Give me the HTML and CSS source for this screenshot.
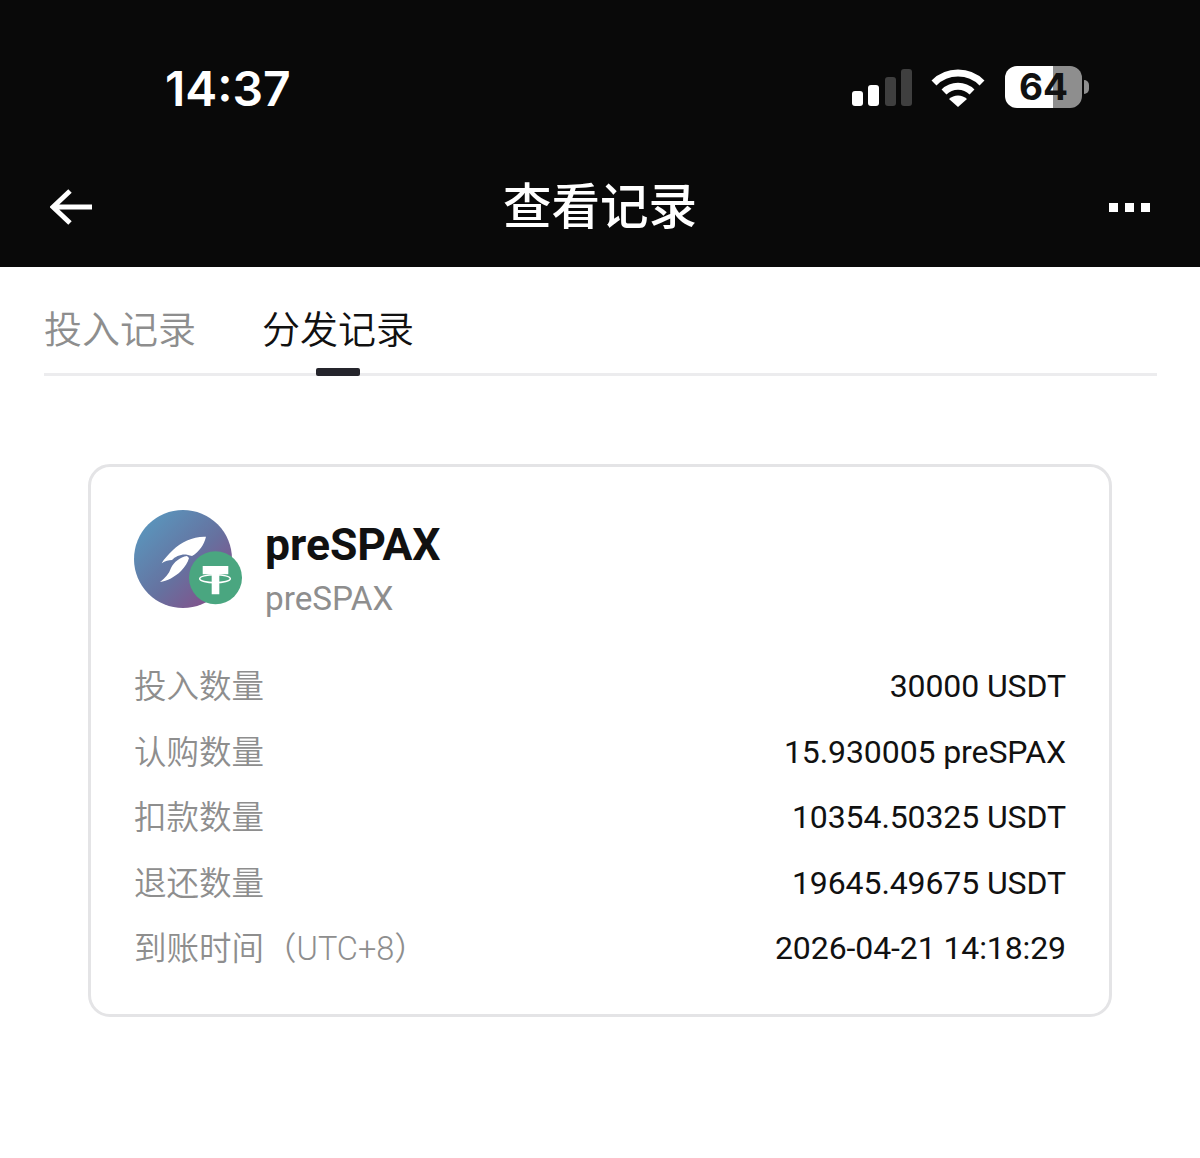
FILE: index.html
```html
<!DOCTYPE html>
<html lang="zh-Hans">
<head>
    <meta charset="UTF-8">
    <meta name="viewport" content="width=device-width, initial-scale=1.0">
    <title>查看记录</title>
    <link rel="stylesheet" href="styles.css">
</head>
<body>
    <header class="top">
        <div class="status">
            <span class="clock">14:37</span>
            <div class="status-icons">
                <svg class="signal" width="60" height="38" viewBox="0 0 60 38">
                    <rect x="0" y="22" width="11" height="15" rx="3" fill="#fff"/>
                    <rect x="16" y="16" width="11" height="21" rx="3" fill="#fff"/>
                    <rect x="33" y="8" width="11" height="29" rx="3" fill="#3f3f3f"/>
                    <rect x="49" y="0" width="11" height="37" rx="3" fill="#3f3f3f"/>
                </svg>
                <svg class="wifi" width="54" height="38" viewBox="0 0 54 38">
                    <path d="M3 14 A34 34 0 0 1 51 14" fill="none" stroke="#fff" stroke-width="7"/>
                    <path d="M13 23 A20 20 0 0 1 41 23" fill="none" stroke="#fff" stroke-width="7"/>
                    <path d="M18 30 A13 13 0 0 1 36 30 L27 38 Z" fill="#fff"/>
                </svg>
                <div class="battery">
                    <div class="battery-body"><span class="battery-num">64</span></div>
                    <div class="battery-cap"></div>
                </div>
            </div>
        </div>
        <div class="nav">
            <svg class="back" width="44" height="36" viewBox="0 0 44 36">
                <path d="M20 2 L3 18 L20 34 M3 18 H42" fill="none" stroke="#fff" stroke-width="5"/>
            </svg>
            <h1>查看记录</h1>
            <div class="more"><i></i><i></i><i></i></div>
        </div>
    </header>

    <div class="tabs">
        <span class="tab">投入记录</span>
        <span class="tab active">分发记录</span>
    </div>

    <section class="card">
        <div class="coin">
            <div class="logo">
                <svg width="110" height="100" viewBox="0 0 110 100">
                    <defs>
                        <linearGradient id="coinbg" x1="0" y1="0" x2="1" y2="1">
                            <stop offset="0.1" stop-color="#5a96bd"/>
                            <stop offset="0.55" stop-color="#66719f"/>
                            <stop offset="0.95" stop-color="#8a4a86"/>
                        </linearGradient>
                    </defs>
                    <circle cx="49" cy="49" r="49" fill="url(#coinbg)"/>
                    <!-- rocket -->
                    <path d="M72 26.7 C60 26 47 32 39 40 C34 45 30 49 27.7 53.3 C31 51 35 50 38 50 C41 46.5 47 44 52 44.5 C55 45 57 46 58 46 C65 42 70 35 72 26.7 Z" fill="#fff"/>
                    <path d="M53 46 C46 47 40 52 37 58 C35 64 31 68 26 72 C33 71 41 67 47 61 C51 57 54 52 55 48 Z" fill="#fff"/>
                    <!-- usdt badge -->
                    <circle cx="81.5" cy="67.7" r="26.5" fill="#4aa680"/>
                    <path d="M68.7 56 H94.3 V64.3 H85.3 V84.3 H77.7 V64.3 H68.7 Z" fill="#fff"/>
                    <ellipse cx="81" cy="68.7" rx="15.3" ry="4" fill="none" stroke="#fff" stroke-width="1.5"/>
                </svg>
            </div>
            <div class="coin-names">
                <div class="coin-name">preSPAX</div>
                <div class="coin-sub">preSPAX</div>
            </div>
        </div>
        <div class="rows">
            <div class="row"><span class="label">投入数量</span><span class="value">30000 USDT</span></div>
            <div class="row"><span class="label">认购数量</span><span class="value">15.930005 preSPAX</span></div>
            <div class="row"><span class="label">扣款数量</span><span class="value">10354.50325 USDT</span></div>
            <div class="row"><span class="label">退还数量</span><span class="value">19645.49675 USDT</span></div>
            <div class="row"><span class="label">到账时间（UTC+8）</span><span class="value">2026-04-21 14:18:29</span></div>
        </div>
    </section>
</body>
</html>
```

FILE: styles.css
```css
* {
    box-sizing: border-box;
}
body {
    margin: 0;
    background-color: #fff;
    font-family: "Roboto", "Noto Sans CJK SC", sans-serif;
    color: #111;
}
.top {
    height: 267px;
    background-color: #090909;
    color: #fff;
    padding: 0 50px;
}
.status {
    height: 165px;
    display: flex;
    justify-content: space-between;
    padding: 64px 61px 0 115px;
}
.clock {
    font-family: "Inter", sans-serif;
    font-size: 48px;
    line-height: 50px;
    font-weight: 600;
}
.status-icons {
    display: flex;
    align-items: flex-start;
    padding-top: 5px;
}
.signal {
    margin-right: 19px;
}
.wifi {
    margin-right: 20px;
}
.battery {
    display: flex;
    align-items: center;
    height: 42px;
    margin-top: -3px;
}
.battery-body {
    width: 77px;
    height: 42px;
    border-radius: 12px;
    background: linear-gradient(to right, #fff 62%, #8e8e8e 62%);
    text-align: center;
}
.battery-num {
    font-family: "Inter", sans-serif;
    color: #111;
    font-size: 37px;
    line-height: 42px;
    font-weight: 700;
}
.battery-cap {
    width: 5px;
    height: 14px;
    margin-left: 2px;
    background-color: #8e8e8e;
    border-radius: 0 6px 6px 0;
}
.nav {
    display: flex;
    align-items: center;
    justify-content: space-between;
    height: 84px;
}
.nav h1 {
    margin: 0;
    padding-top: 2px;
    font-size: 48.5px;
    font-weight: 500;
    line-height: 84px;
}
.more {
    display: flex;
    justify-content: flex-end;
    gap: 7px;
    width: 44px;
}
.more i {
    display: block;
    width: 9px;
    height: 9px;
    background-color: #fff;
}
.tabs {
    display: flex;
    gap: 66px;
    margin: 0 43px 0 44px;
    height: 109px;
    padding-top: 38px;
    border-bottom: 3px solid #ececee;
}
.tab {
    position: relative;
    font-size: 38px;
    line-height: 50px;
    color: #8e8e8e;
    font-weight: 350;
}
.tab.active {
    color: #111;
}
.tab.active::after {
    content: "";
    position: absolute;
    left: 54px;
    bottom: -3px;
    width: 44px;
    height: 8px;
    border-radius: 2px;
    background-color: #25252c;
}
.card {
    width: 1024px;
    height: 553px;
    margin: 88px 0 0 88px;
    padding: 43px 43px 0 43px;
    border: 3px solid #e4e4e6;
    border-radius: 22px;
}
.coin {
    display: flex;
    align-items: flex-start;
}
.logo {
    width: 131px;
    height: 100px;
}
.coin-names {
    margin-top: 4px;
}
.coin-name {
    font-size: 44.5px;
    line-height: 62px;
    font-weight: 700;
}
.coin-sub {
    font-size: 33.3px;
    line-height: 46px;
    color: #8e8e8e;
}
.rows {
    margin-top: 43px;
}
.row {
    display: flex;
    justify-content: space-between;
    height: 65.5px;
    line-height: 44px;
}
.label {
    font-size: 32.5px;
    color: #8e8e8e;
    font-weight: 350;
}
.value {
    font-size: 32px;
    line-height: 42px;
    letter-spacing: -0.1px;
    color: #111;
}
```
